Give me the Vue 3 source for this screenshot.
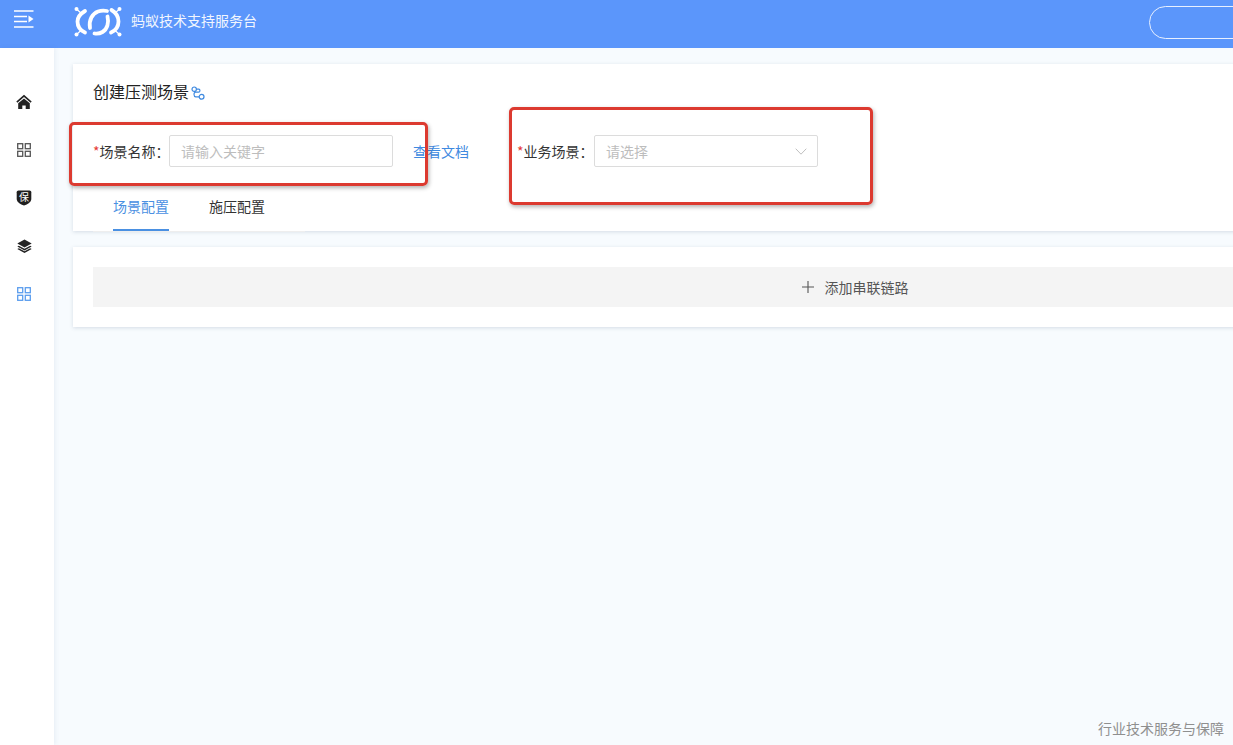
<script setup>
const tabs = [
  { label: '场景配置', active: true },
  { label: '施压配置', active: false },
]
</script>

<template>
  <div class="app">
    <header class="topbar">
      <button class="menu-btn" aria-label="menu">
        <svg width="20" height="18" viewBox="0 0 20 18" fill="none">
          <path d="M0 1h19.500M0 6.500h13M0 11.500h13M0 17h19.500" stroke="#fff" stroke-width="1.500" />
          <path d="M14.500 5.500 19.500 9l-5 3.500z" fill="#fff" />
        </svg>
      </button>
      <svg class="logo" width="48" height="32" viewBox="0 0 48 32" fill="none">
        <g stroke="#fff" stroke-width="3.800" stroke-linecap="round">
          <path d="M11 6C6 9 3.500 12 3.500 16.500c0 5 3 9 7.500 11" />
          <path d="M37.500 5C42.500 8 44.500 12 44.500 16.500c0 5-3 9-7.500 11" />
          <path d="M16 23C14.500 15 18.500 8.500 24 6.500c3-1 6-1 9-.5" />
          <path d="M33.500 11.500c1.500 6 0 12.500-5 15.500-2.500 1.500-5 2-8 1.500" />
        </g>
        <g fill="#fff">
          <circle cx="2.500" cy="4" r="2" />
          <circle cx="45.500" cy="4" r="2" />
          <circle cx="2.500" cy="29.500" r="2" />
          <circle cx="45.500" cy="29.500" r="2" />
        </g>
        <path d="M2.500 4 8 9M45.500 4 40 9M2.500 29.500l5.500-5M45.500 29.500l-5.500-5" stroke="#fff" stroke-width="1.200" />
      </svg>
      <span class="brand">蚂蚁技术支持服务台</span>
      <div class="search-pill"></div>
    </header>

    <div class="body">
      <aside class="sidebar">
        <div class="nav-item">
          <svg width="16" height="16" viewBox="0 0 16 16">
            <path d="M8 .8.300 7.600l1.100 1.100L8 3l6.600 5.700 1.100-1.100z" fill="#222" />
            <path d="M8 4.400 2.200 9.300V15h4.100v-3.600h3.400V15h4.100V9.300z" fill="#222" />
          </svg>
        </div>
        <div class="nav-item">
          <svg width="14" height="14" viewBox="0 0 14 14" fill="none" stroke="#555" stroke-width="1.300">
            <rect x=".7" y=".7" width="5" height="5" />
            <rect x="8.300" y=".7" width="5" height="5" />
            <rect x=".7" y="8.300" width="5" height="5" />
            <rect x="8.300" y="8.300" width="5" height="5" />
          </svg>
        </div>
        <div class="nav-item">
          <div class="shield">
            <svg width="16" height="16" viewBox="0 0 16 16">
              <path d="M2.500.5h11c1 0 1.800.8 1.800 1.800v6.700c0 3-3.600 5.500-7.300 6.500C4.300 14.500.7 12 .7 9V2.300C.7 1.300 1.500.5 2.500.5z" fill="#1f1f1f" />
            </svg>
            <span class="shield-text">保</span>
          </div>
        </div>
        <div class="nav-item">
          <svg width="15" height="14" viewBox="0 0 15 14">
            <path d="M7.500.5 14.700 4.500 7.500 8.500.3 4.500z" fill="#222" />
            <path d="M1.800 6.700.3 7.500l7.200 4 7.200-4-1.500-.8-5.700 3.100z" fill="#222" />
            <path d="M1.800 9.200.3 10l7.200 4 7.200-4-1.500-.8-5.700 3.100z" fill="#222" />
          </svg>
        </div>
        <div class="nav-item">
          <svg width="14" height="14" viewBox="0 0 14 14" fill="none" stroke="#5b9dee" stroke-width="1.300">
            <rect x=".7" y=".7" width="5" height="5" />
            <rect x="8.300" y=".7" width="5" height="5" />
            <rect x=".7" y="8.300" width="5" height="5" />
            <rect x="8.300" y="8.300" width="5" height="5" />
          </svg>
        </div>
      </aside>

      <main class="main">
        <section class="card head-card">
          <h1 class="title">
            创建压测场景
            <svg class="title-icon" width="14" height="14" viewBox="0 0 14 14" fill="none" stroke="#3f8ae0" stroke-width="1.200">
              <circle cx="3.200" cy="3.200" r="2.200" />
              <circle cx="10.600" cy="10.800" r="2.400" />
              <path d="M5.400 3.200h2.400c1.500 0 1.500 3-.2 3H4.500c-2 0-2 4.400.2 4.600h3.500" />
            </svg>
          </h1>
          <div class="form-row">
            <div class="field">
              <label class="label"><i class="star">*</i>场景名称：</label>
              <div class="control input-text">请输入关键字</div>
            </div>
            <a class="doc-link">查看文档</a>
            <div class="field field-biz">
              <label class="label"><i class="star">*</i>业务场景：</label>
              <div class="control select">
                <span>请选择</span>
                <svg width="12" height="7" viewBox="0 0 12 7" fill="none" stroke="#bfbfbf" stroke-width="1">
                  <path d="M.7.7 6 6.200 11.300.7" />
                </svg>
              </div>
            </div>
          </div>
          <nav class="tabs">
            <span v-for="t in tabs" :key="t.label" class="tab" :class="{ active: t.active }">{{ t.label }}</span>
          </nav>
        </section>

        <section class="card chain-card">
          <div class="add-chain">
            <svg width="12" height="12" viewBox="0 0 12 12" stroke="#555" stroke-width="1.100">
              <path d="M6 0v12M0 6h12" />
            </svg>
            <span>添加串联链路</span>
          </div>
        </section>
      </main>
    </div>

    <div class="mark mark-name"></div>
    <div class="mark mark-biz"></div>
    <div class="watermark">行业技术服务与保障</div>
  </div>
</template>

<style scoped>
.app {
  position: relative;
  width: 1233px;
  height: 745px;
  overflow: hidden;
  display: flex;
  flex-direction: column;
  background: #f7fbfe;
  font-family: "Noto Sans CJK SC", "Liberation Sans", sans-serif;
  color: #333;
}
.topbar {
  flex: none;
  height: 48px;
  display: flex;
  align-items: flex-start;
  background: #5b96fb;
  color: #fff;
}
.menu-btn {
  flex: none;
  width: 54px;
  height: 37px;
  padding: 0 0 0 14px;
  display: flex;
  align-items: center;
  border: 0;
  background: none;
}
.logo {
  margin: 5px 0 0 20px;
  flex: none;
}
.brand {
  margin: 10px 0 0 9px;
  font-size: 14px;
  line-height: 21px;
  opacity: 0.92;
}
.search-pill {
  box-sizing: border-box;
  margin: 6px -60px 0 auto;
  width: 144px;
  height: 33px;
  border: 1px solid #e8f0ff;
  border-radius: 17px;
}
.body {
  flex: 1;
  min-height: 0;
  display: flex;
}
.sidebar {
  flex: none;
  width: 54px;
  padding-top: 42px;
  background: #fff;
  box-shadow: 1px 0 5px rgba(60, 90, 140, 0.09);
  display: flex;
  flex-direction: column;
  align-items: center;
  gap: 24px;
}
.nav-item {
  height: 24px;
  width: 54px;
  margin-left: -6px;
  display: flex;
  align-items: center;
  justify-content: center;
}
.shield {
  position: relative;
  width: 16px;
  height: 16px;
}
.shield svg {
  display: block;
}
.shield-text {
  position: absolute;
  inset: 0 0 2px;
  display: flex;
  align-items: center;
  justify-content: center;
  font-size: 10px;
  line-height: 1;
  color: #fff;
}
.main {
  flex: none;
  width: 1603px;
  padding: 16px 0 0 19px;
  box-sizing: border-box;
  display: flex;
  flex-direction: column;
  gap: 16px;
}
.card {
  background: #fff;
  box-shadow: 0 1px 4px rgba(40, 60, 100, 0.16);
}
.head-card {
  height: 167px;
  padding: 17px 0 0 20px;
  box-sizing: border-box;
}
.title {
  margin: 0;
  display: flex;
  align-items: center;
  gap: 2px;
  font-size: 16px;
  line-height: 21px;
  font-weight: 400;
  color: #222;
}
.title-icon {
  margin-top: 2px;
}
.form-row {
  margin-top: 33px;
  display: flex;
  align-items: center;
  height: 32px;
}
.field {
  display: flex;
  align-items: center;
}
.label {
  width: 76px;
  font-size: 14px;
  line-height: 20px;
  color: #333;
  white-space: nowrap;
}
.star {
  font-style: normal;
  color: #e53935;
}
.control {
  box-sizing: border-box;
  width: 224px;
  height: 32px;
  padding: 0 11px;
  display: flex;
  align-items: center;
  border: 1px solid #dcdcdc;
  border-radius: 2px;
  background: #fff;
  font-size: 14px;
  color: #bdbdbd;
}
.select {
  justify-content: space-between;
  padding-right: 10px;
}
.doc-link {
  margin-left: 20px;
  font-size: 14px;
  color: #3f8ae0;
}
.field-biz {
  margin-left: 48px;
}
.field-biz .label {
  width: 77px;
}
.tabs {
  margin-top: 24px;
  width: 192px;
  padding-left: 20px;
  display: flex;
  gap: 40px;
  border-bottom: 1px solid #eee;
}
.tab {
  height: 40px;
  box-sizing: border-box;
  padding-top: 5px;
  font-size: 14px;
  line-height: 20px;
  color: #333;
}
.tab.active {
  color: #4a90e2;
  border-bottom: 2px solid #4a90e2;
  margin-bottom: -1px;
}
.chain-card {
  height: 80px;
  padding: 20px 40px 0 20px;
  box-sizing: border-box;
}
.add-chain {
  height: 40px;
  display: flex;
  align-items: center;
  justify-content: center;
  gap: 11px;
  background: #f4f4f4;
  font-size: 14px;
  color: #555;
}
.mark {
  position: absolute;
  box-sizing: border-box;
  border: 3px solid #dc3a30;
  border-radius: 5px;
  box-shadow: 1px 2px 4px rgba(0, 0, 0, 0.3);
}
.mark-name {
  left: 69px;
  top: 122px;
  width: 359px;
  height: 64px;
}
.mark-biz {
  left: 509px;
  top: 107px;
  width: 364px;
  height: 98px;
}
.watermark {
  position: absolute;
  right: 9px;
  bottom: 7px;
  font-size: 14px;
  line-height: 20px;
  color: #8f8f8f;
}
</style>
